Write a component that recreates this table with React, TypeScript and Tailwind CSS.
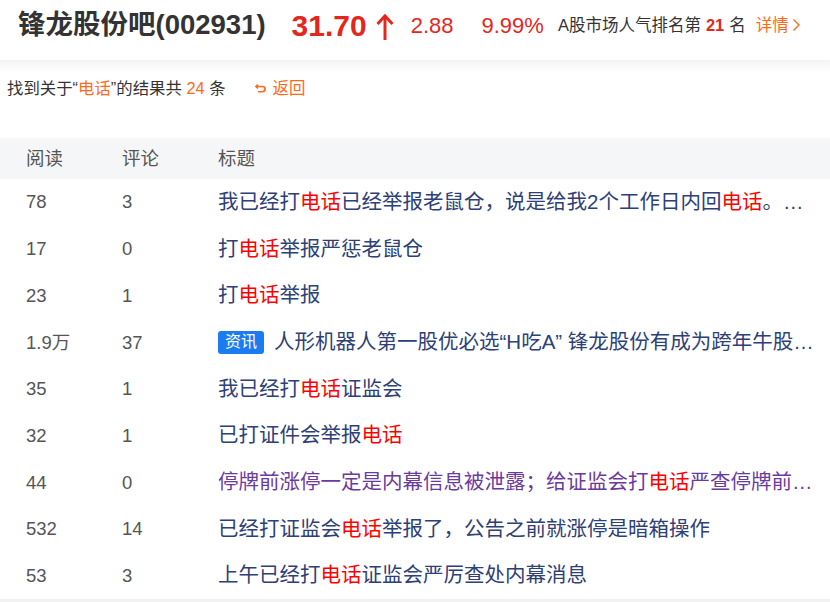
import React from "react"

const rows = [
    { read: "78", comment: "3", parts: ["我已经打", "#电话", "已经举报老鼠仓，说是给我2个工作日内回", "#电话", "。希望尽快处理"], visited: false },
    { read: "17", comment: "0", parts: ["打", "#电话", "举报严惩老鼠仓"], visited: false },
    { read: "23", comment: "1", parts: ["打", "#电话", "举报"], visited: false },
    { read: "1.9万", comment: "37", parts: ["人形机器人第一股优必选“H吃A” 锋龙股份有成为跨年牛股的潜力吗？"], visited: false, badge: "资讯" },
    { read: "35", comment: "1", parts: ["我已经打", "#电话", "证监会"], visited: false },
    { read: "32", comment: "1", parts: ["已打证件会举报", "#电话"], visited: false },
    { read: "44", comment: "0", parts: ["停牌前涨停一定是内幕信息被泄露；给证监会打", "#电话", "严查停牌前的异常交易"], visited: true },
    { read: "532", comment: "14", parts: ["已经打证监会", "#电话", "举报了，公告之前就涨停是暗箱操作"], visited: false },
    { read: "53", comment: "3", parts: ["上午已经打", "#电话", "证监会严厉查处内幕消息"], visited: false },
]

function UpArrow() {
    return (
        <svg width="20" height="28" viewBox="0 0 20 28" className="ml-2 mt-1">
            <path d="M10 3 L10 27" stroke="#e4261c" strokeWidth="3" fill="none" />
            <path d="M2.5 11 L10 3 L17.5 11" stroke="#e4261c" strokeWidth="3" fill="none" strokeLinejoin="miter" />
        </svg>
    )
}

function BackIcon() {
    return (
        <svg width="12" height="12" viewBox="0 0 12 12" className="mr-[6px]">
            <path d="M3 2.5 L1 4.5 L3 6.5" stroke="#ff6a1a" strokeWidth="1.6" fill="none" />
            <path d="M1.5 4.5 H7.5 A2.6 2.6 0 0 1 7.5 9.7 H3" stroke="#ff6a1a" strokeWidth="1.6" fill="none" />
        </svg>
    )
}

export default function App() {
    return (
        <div className="w-[830px] h-[602px] overflow-hidden bg-white font-['Liberation_Sans','Noto_Sans_CJK_SC',sans-serif]">
            {/* stock header */}
            <div className="h-[60px] pb-[10px] flex items-center pl-[18px]">
                <h1 className="text-[27.5px] font-bold text-[#333]">锋龙股份吧(002931)</h1>
                <span className="ml-[26px] text-[30px] font-bold text-[#e4261c]">31.70</span>
                <UpArrow />
                <span className="ml-[16px] text-[22px] text-[#e4261c]">2.88</span>
                <span className="ml-[28px] text-[22px] text-[#e4261c]">9.99%</span>
                <span className="ml-[14px] text-[16.5px] text-[#333]">A股市场人气排名第</span>
                <span className="ml-[5px] text-[16.5px] font-bold text-[#e4261c]">21</span>
                <span className="ml-[5px] text-[16.5px] text-[#333]">名</span>
                <span className="ml-[10px] text-[16.5px] text-[#ff6a1a] flex items-center">
                    详情
                    <svg width="9" height="14" viewBox="0 0 9 14" className="ml-[3px]">
                        <path d="M1.5 1.5 L7 7 L1.5 12.5" stroke="#ff6a1a" strokeWidth="1.4" fill="none" />
                    </svg>
                </span>
            </div>
            <div className="h-[12px] bg-gradient-to-b from-[#f3f3f3] to-white" />

            {/* search result line */}
            <div className="h-[32px] flex items-center pl-[7px] text-[16.4px] text-[#333]">
                <span>找到关于“<span className="text-[#ff6a1a]">电话</span>”的结果共 <span className="text-[#ff6a1a]">24</span> 条</span>
                <span className="ml-[29px] flex items-center text-[#ff6a1a] text-[16.5px]">
                    <BackIcon />
                    返回
                </span>
            </div>

            <div className="h-[34px]" />

            {/* table */}
            <div className="flex h-[41px] items-center bg-[#f5f6f8] text-[18.5px] text-[#555]">
                <div className="w-[122px] pl-[26px]">阅读</div>
                <div className="w-[96px]">评论</div>
                <div>标题</div>
            </div>
            {rows.map((row, i) => (
                <div key={i} className="flex h-[46.7px] items-center">
                    <div className="w-[122px] pl-[26px] text-[18.5px] text-[#555]">{row.read}</div>
                    <div className="w-[96px] text-[18.5px] text-[#555]">{row.comment}</div>
                    <div className={`flex items-center w-[599px] text-[20.5px] ${row.visited ? "text-[#6b3a9e]" : "text-[#2d4077]"}`}>
                        {row.badge && (
                            <span className="shrink-0 mr-[10px] h-[23px] px-[7px] flex items-center rounded-[3px] bg-[#1a7cf0] text-white text-[16px]">
                                {row.badge}
                            </span>
                        )}
                        <span className="truncate">
                            {row.parts.map((p, j) =>
                                p.startsWith("#") ? (
                                    <span key={j} className="text-[#ff0000]">{p.slice(1)}</span>
                                ) : (
                                    <span key={j}>{p}</span>
                                )
                            )}
                        </span>
                    </div>
                </div>
            ))}
            <div className="h-[10px] bg-[#f2f2f2]" />
        </div>
    )
}
